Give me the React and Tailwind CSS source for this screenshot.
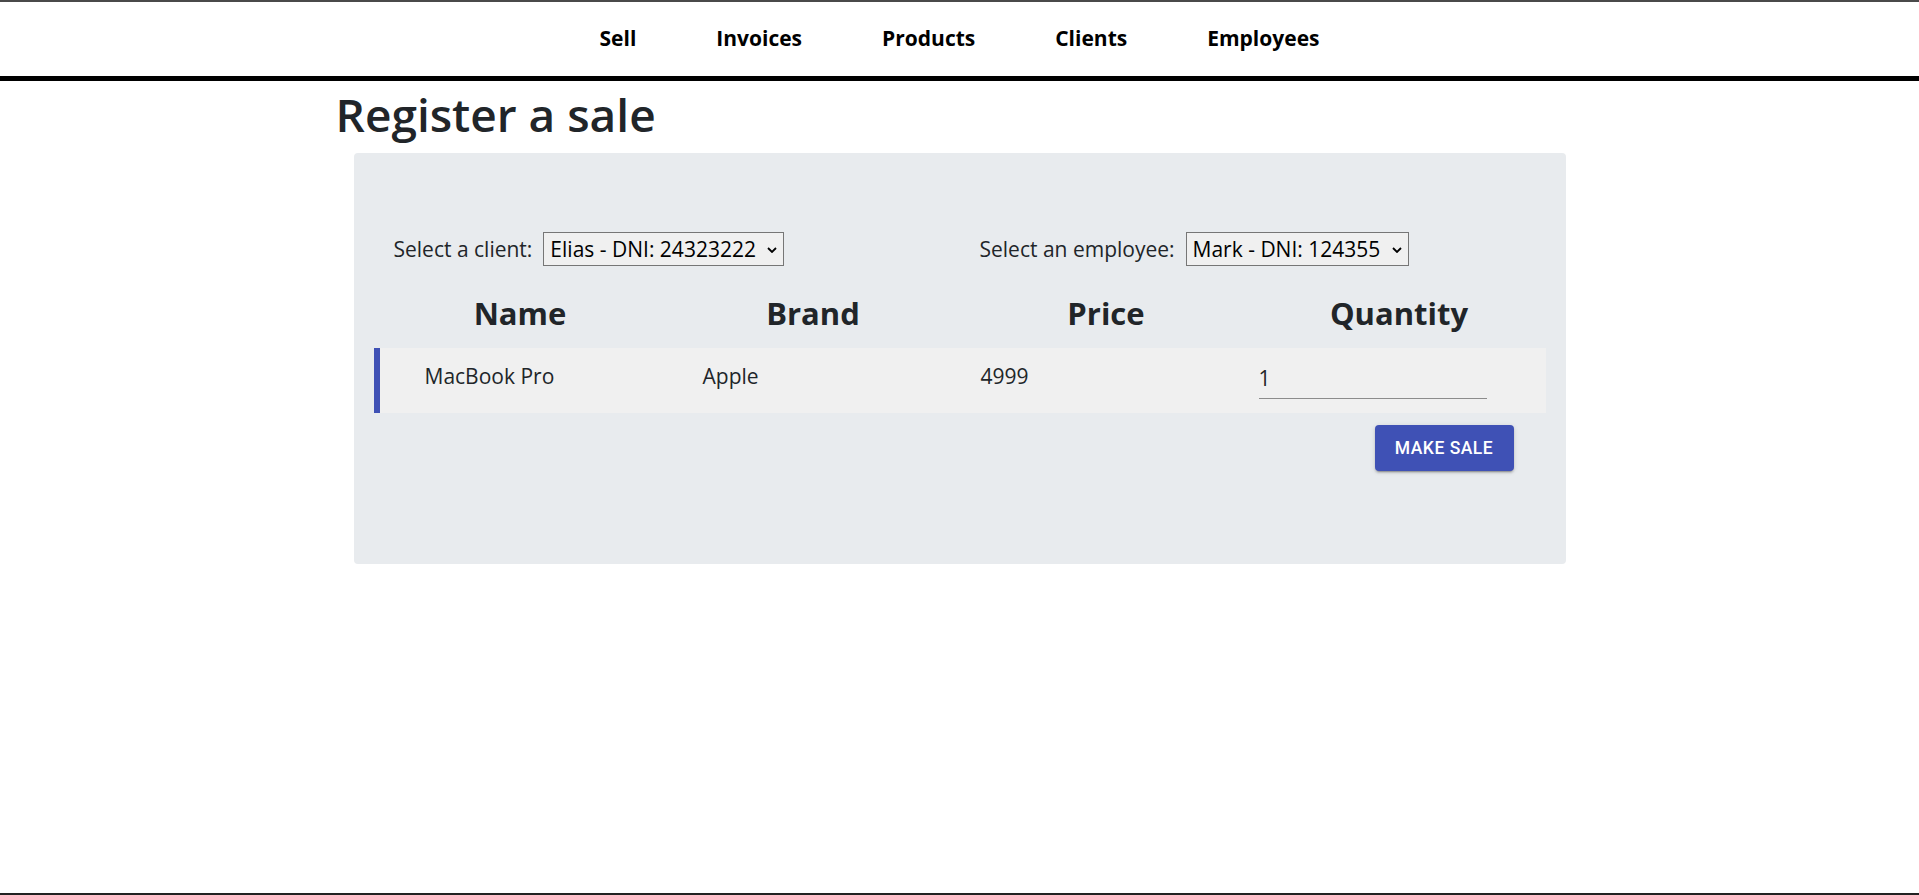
import React from "react";

const navLinks = ["Sell", "Invoices", "Products", "Clients", "Employees"];
const columns = ["Name", "Brand", "Price", "Quantity"];

const Chevron = () => (
  <svg
    width="10"
    height="6"
    viewBox="0 0 10 6"
    className="pointer-events-none absolute right-[7px] top-[15px]"
  >
    <path d="M1 1l4 4 4-4" fill="none" stroke="#000" strokeWidth="1.8" />
  </svg>
);

const SelectBox = ({ label, value, width }) => (
  <div className="flex items-center gap-[11px] px-5">
    <label className="text-[21px] leading-[34px] text-[#212529]">{label}</label>
    <div className="relative">
      <select
        defaultValue={value}
        className={`${width} h-[34px] appearance-none border border-[#767676] bg-[#f0f0f0] pl-[6px] pr-[20px] text-[21px] leading-[32px] text-black outline-none`}
      >
        <option>{value}</option>
      </select>
      <Chevron />
    </div>
  </div>
);

export default function App() {
  return (
    <div className="h-[895px] border-t-2 border-b-2 border-t-[#4a4a4a] border-b-[#222] bg-white font-['Open_Sans','Noto_Sans',sans-serif] text-[#212529]">
      <nav className="flex h-[79px] items-center justify-center gap-[80px] border-b-[5px] border-black pb-[1px]">
        {navLinks.map((link) => (
          <a key={link} href="#" className="text-[21px] font-bold text-black">
            {link}
          </a>
        ))}
      </nav>

      <main className="mx-auto w-[1248px]">
        <h1 className="mt-[4px] mb-[10px] text-[46px] leading-[58px] font-semibold">
          Register a sale
        </h1>

        <div className="mx-[18px] h-[411px] rounded bg-[#e8ebee] p-5">
          <div className="mt-[59px] grid grid-cols-2">
            <SelectBox label="Select a client:" value="Elias - DNI: 24323222" width="w-[241px]" />
            <SelectBox label="Select an employee:" value="Mark - DNI: 124355" width="w-[223px]" />
          </div>

          <div className="mt-[29px] grid grid-cols-4 text-center">
            {columns.map((col) => (
              <h3 key={col} className="text-[31px] leading-[37px] font-bold">
                {col}
              </h3>
            ))}
          </div>

          <div className="mt-4 flex h-[65px] bg-[#f0f0f0]">
            <div className="w-[6px] bg-[#3f51b5]" />
            <div className="grid flex-1 grid-cols-[278px_278px_278px_278px] pl-[45px] text-[21px] leading-[32px]">
              <div className="pt-[12px]">MacBook Pro</div>
              <div className="pt-[12px]">Apple</div>
              <div className="pt-[12px]">4999</div>
              <div>
                <input
                  type="text"
                  defaultValue="1"
                  className="mt-[10px] h-[41px] w-[228px] border-b border-[#8c8c8c] bg-transparent text-[21px] text-[#212529] outline-none"
                />
              </div>
            </div>
          </div>

          <div className="mt-3 flex justify-end pr-[32px]">
            <button
              type="button"
              className="h-[46px] w-[139px] rounded bg-[#3f51b5] font-['Roboto',sans-serif] text-[17.5px] font-medium tracking-[0.5px] text-white uppercase shadow-[0_3px_1px_-2px_rgba(0,0,0,0.2),0_2px_2px_0_rgba(0,0,0,0.14),0_1px_5px_0_rgba(0,0,0,0.12)]"
            >
              Make sale
            </button>
          </div>
        </div>
      </main>
    </div>
  );
}
